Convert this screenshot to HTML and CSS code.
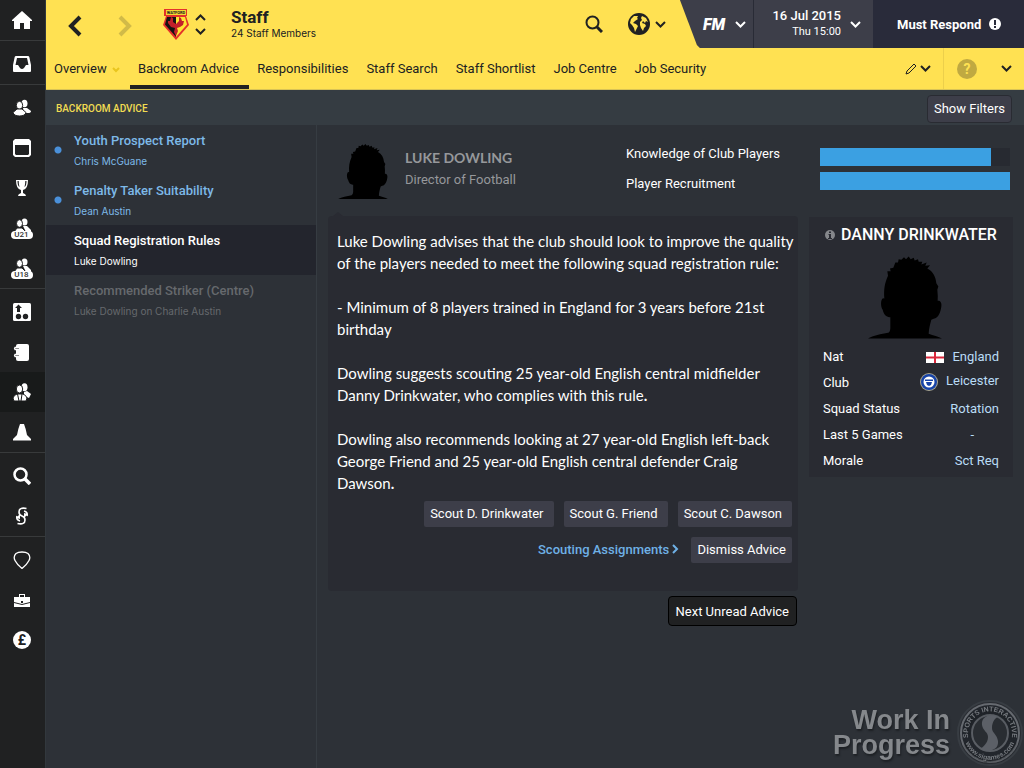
FILE: index.html
```html
<!DOCTYPE html>
<html lang="en">
<head>
    <meta charset="UTF-8">
    <meta name="viewport" content="width=device-width, initial-scale=1.0">
    <title>Staff - Backroom Advice</title>
    <link rel="stylesheet" href="styles.css">
</head>
<body>
    <nav class="sidebar" aria-label="Main">
        <div class="side-group">
            <a href="#" aria-label="Home"><svg width="20" height="20" viewBox="0 0 20 20"><path d="M10 1 20 10v1h-2v8h-6v-6H8v6H2v-8H0v-1z"/></svg></a>
        </div>
        <div class="side-group">
            <a href="#" aria-label="Inbox"><svg width="18" height="18" viewBox="0 0 18 18"><path fill-rule="evenodd" d="M3 1h12q1 0 1.300 1L18 10v6q0 1-1 1H1q-1 0-1-1v-6l1.700-8Q2 1 3 1zm1 2L2.500 10H5l2 3q2 2 4 0l2-3h2.500L14 3z"/></svg></a>
        </div>
        <div class="side-group">
            <a href="#" aria-label="Squad"><svg width="18" height="18" viewBox="0 0 18 18"><ellipse cx="11.500" cy="4.500" rx="3" ry="3.800"/><path d="M10 9h4l4 3q0 2-3 2h-4z"/><g class="cut"><ellipse cx="6.500" cy="6.300" rx="3.200" ry="4"/><path d="M4 10h5l4 3.500Q12 17 6.500 17T0 13.500z"/></g></svg></a>
            <a href="#" aria-label="Calendar"><svg width="18" height="18" viewBox="0 0 18 18"><path fill-rule="evenodd" d="M2 0h14l2 2v14l-2 2H2l-2-2V2zm0 6v9l1 1h12l1-1V6z"/></svg></a>
            <a href="#" aria-label="Competitions"><svg width="18" height="18" viewBox="0 0 18 18"><path fill-rule="evenodd" d="M3 1h12q0 9-5 10v3q3 1 3 3H5q0-2 3-3v-3Q3 10 3 1zm1.500 1q0 5 2 6Q5.700 5 5.700 2zm7.800 0q0 3-.8 6 2-1 2-6z"/></svg></a>
            <a href="#" aria-label="Under 21s" class="team"><svg width="18" height="15" viewBox="0 0 18 15"><ellipse cx="11.500" cy="4" rx="3" ry="3.500"/><path d="M10 8h4l4 4v2h-5z"/><g class="cut"><ellipse cx="6.500" cy="5.500" rx="3" ry="3.800"/><path d="M4 10h5l4 4H1z"/></g></svg><span>U21</span></a>
            <a href="#" aria-label="Under 18s" class="team"><svg width="18" height="15" viewBox="0 0 18 15"><ellipse cx="11.500" cy="4" rx="3" ry="3.500"/><path d="M10 8h4l4 4v2h-5z"/><g class="cut"><ellipse cx="6.500" cy="5.500" rx="3" ry="3.800"/><path d="M4 10h5l4 4H1z"/></g></svg><span>U18</span></a>
        </div>
        <div class="side-group">
            <a href="#" aria-label="Tactics"><svg width="18" height="18" viewBox="0 0 18 18"><rect width="18" height="18" rx="1.500"/><g fill="#202122"><path d="M5.500 1.500 9 5H7v4H4V5H2z"/><circle cx="5.500" cy="13.500" r="2.700"/><circle cx="12.500" cy="13.500" r="2.700"/></g></svg></a>
            <a href="#" aria-label="Team report"><svg width="18" height="18" viewBox="0 0 18 18"><rect x="3" y="1" width="13" height="17" rx="2"/><g fill="none" stroke="#202122" stroke-width="3"><path d="M1 5.500h5M1 12.500h5"/></g><path fill="none" stroke="#fff" stroke-width="1.300" d="M6 4.500H2q-1 1 0 2h4M6 11.500H2q-1 1 0 2h4"/></svg></a>
            <a href="#" aria-label="Staff" class="active"><svg width="18" height="18" viewBox="0 0 18 18"><ellipse cx="11.500" cy="4.200" rx="3" ry="4"/><path d="m11 9 3-1 4 3-2 4-5-2z"/><g class="cut"><ellipse cx="6.500" cy="6" rx="3.200" ry="4"/><path d="M4 11h6q3 1 4 4l-1 3H1l-1-3q1-3 4-4z"/></g><path stroke="#181a1a" d="M4.500 11 6 18M9 11l-1 7"/></svg></a>
            <a href="#" aria-label="Training"><svg width="18" height="18" viewBox="0 0 18 18"><path d="M7 1h4q2 5 3 11l4 4v1.500H0V16l4-4Q5 6 7 1z"/></svg></a>
        </div>
        <div class="side-group">
            <a href="#" aria-label="Scouting"><svg width="18" height="18" viewBox="0 0 18 18" fill="none" stroke="#fff" stroke-width="2.500"><circle cx="7.500" cy="7.500" r="6"/><path stroke-width="3.500" d="m12 12 5 5"/></svg></a>
            <a href="#" aria-label="Transfers"><svg width="18" height="18" viewBox="0 0 18 18"><path fill="none" stroke="#fff" stroke-width="1.600" d="M13.500 1.500Q6 0 6 5q0 3 3 4t3 4q0 5-7.500 3.500M4 9q-1 4 3 5M14 9q1-4-3-5"/><path d="m3 11 4-4v5zM15 7l-4 4V6z"/></svg></a>
        </div>
        <div class="side-group">
            <a href="#" aria-label="Club"><svg width="18" height="18" viewBox="0 0 18 18" fill="none" stroke="#fff" stroke-width="1.300"><path d="M9 1q4 0 6 1.500 3 3 1 7-2 4-7 8-5-4-7-8-2-4 1-7Q5 1 9 1z"/></svg></a>
            <a href="#" aria-label="Board"><svg width="18" height="18" viewBox="0 0 18 18"><path fill-rule="evenodd" d="M6 3h6v3h5v5l-8 2-8-2V6h5zm1 1v2h4V4z"/><path d="m1 12 8 2 8-2v4H1z"/><path fill="#202122" d="M8 10h2v2H8z"/></svg></a>
            <a href="#" aria-label="Finances"><svg width="18" height="18" viewBox="0 0 18 18"><circle cx="9" cy="9" r="9"/><text class="pound" x="9" y="14" text-anchor="middle">£</text></svg></a>
        </div>
    </nav>

    <div class="page">
        <header>
            <div class="top-bar">
                <button class="icon-btn back" aria-label="Back"><svg width="14" height="22" viewBox="0 0 14 22"><path d="M12 2 3 11l9 9"/></svg></button>
                <button class="icon-btn forward" aria-label="Forward"><svg width="14" height="22" viewBox="0 0 14 22"><path d="m2 2 9 9-9 9"/></svg></button>
                <svg class="crest" width="26" height="31" viewBox="0 0 26 31">
                    <path fill="#e4312b" d="M1 0h23v7h-1l3 9-13 15L0 16l3-9H1z"/>
                    <path fill="#161412" d="M4 8h9v20L2 15.500z"/>
                    <path fill="#ffe533" d="M13 8h9l2 7.500L13 28z"/>
                    <path fill="#f4d731" d="M3 1h20v5H3z"/>
                    <path fill="#c3202a" d="m5 12 2 0 1-4 2 1 0 4 3 2 3-3 0-4 2 1 1 3 2 0-1 4-3 2-3 1 1 3-2 5-2-4 1-4-4-1-3-4z"/>
                    <text class="crest-name" x="13" y="5" text-anchor="middle">WATFORD</text>
                </svg>
                <div class="stepper">
                    <button class="icon-btn" aria-label="Previous section"><svg width="11" height="7" viewBox="0 0 11 7"><path d="m1 6 4.500-4.500L10 6"/></svg></button>
                    <button class="icon-btn" aria-label="Next section"><svg width="11" height="7" viewBox="0 0 11 7"><path d="m1 1 4.500 4.500L10 1"/></svg></button>
                </div>
                <div class="title">
                    <h1>Staff</h1>
                    <p>24 Staff Members</p>
                </div>
                <button class="icon-btn search" aria-label="Search"><svg width="18" height="18" viewBox="0 0 18 18"><circle cx="7.500" cy="7.500" r="6"/><path stroke-width="3" d="m12 12 5 5"/></svg></button>
                <button class="icon-btn world" aria-label="World">
                    <svg width="22" height="22" viewBox="0 0 22 22"><circle cx="11" cy="11" r="11" fill="#202122" stroke="none"/><path stroke="none" fill="#ffe152" d="m3 6 3-3 4 0-1 2 1 1-3 2-2 2 3 1 2 2-1 2-2 4-1-4-2-3-2-2zM14 3l4 2 2 4-2-1-1 2-2-2-1 2 3 1 1 2-2 2-1 3-2-3-1-3 0-3 2-2-1-2z"/></svg>
                    <svg width="11" height="7" viewBox="0 0 11 7"><path d="m1 1 4.500 4.500L10 1"/></svg>
                </button>
                <div class="game-bar">
                    <button class="fm"><strong>FM</strong><svg width="11" height="7" viewBox="0 0 11 7"><path d="m1 1 4.500 4.500L10 1"/></svg></button>
                    <button class="date"><span><strong>16 Jul 2015</strong><small>Thu 15:00</small></span><svg width="11" height="7" viewBox="0 0 11 7"><path d="m1 1 4.500 4.500L10 1"/></svg></button>
                    <button class="respond">Must Respond <svg width="12" height="12" viewBox="0 0 12 12"><circle cx="6" cy="6" r="6" fill="#fff" stroke="none"/><path stroke="#292b3a" d="M6 2v5M6 8v2"/></svg></button>
                </div>
            </div>
            <div class="tab-bar">
                <nav class="tabs" aria-label="Staff">
                    <a href="#">Overview <svg width="8" height="6" viewBox="0 0 8 6"><path d="m1 1 3 3 3-3"/></svg></a>
                    <a href="#" class="active">Backroom Advice</a>
                    <a href="#">Responsibilities</a>
                    <a href="#">Staff Search</a>
                    <a href="#">Staff Shortlist</a>
                    <a href="#">Job Centre</a>
                    <a href="#">Job Security</a>
                </nav>
                <button class="icon-btn edit" aria-label="Edit">
                    <svg width="12" height="12" viewBox="0 0 12 12"><path stroke-width="1" d="m1 11 1-3 7-7 2 2-7 7z"/></svg>
                    <svg width="11" height="7" viewBox="0 0 11 7"><path d="m1 1 4.500 4.500L10 1"/></svg>
                </button>
                <div class="help">
                    <button class="help-btn" aria-label="Help">?</button>
                    <button class="icon-btn" aria-label="More"><svg width="11" height="7" viewBox="0 0 11 7"><path d="m1 1 4.500 4.500L10 1"/></svg></button>
                </div>
            </div>
        </header>

        <div class="sub-header">
            <h2>Backroom Advice</h2>
            <button class="btn filters">Show Filters</button>
        </div>

        <div class="content">
            <ul class="advice-list">
                <li><a href="#" class="unread"><b>Youth Prospect Report</b><span>Chris McGuane</span></a></li>
                <li><a href="#" class="unread"><b>Penalty Taker Suitability</b><span>Dean Austin</span></a></li>
                <li><a href="#" class="selected"><b>Squad Registration Rules</b><span>Luke Dowling</span></a></li>
                <li><a href="#" class="done"><b>Recommended Striker (Centre)</b><span>Luke Dowling on Charlie Austin</span></a></li>
            </ul>

            <main>
                <section class="advisor">
                    <svg class="face" width="50" height="55" viewBox="0 0 222 246"><path d="M0 246C15 238 40 232 60 229q6-1 7-14v-33c-12 1-19-7-23-22-6-10-7-30 1-35l4 1c-2-26 1-46 11-68l-2-14h10l-2-8 10-2 6-16h8l2-10 8 2 8-8 6 6 8-8 6 8 9-4 3 8 10-4 2 8h11l-3 8 16-6-4 10 14-2-8 10c17 9 25 24 27 44l6 10-3 10q2 18 1 33c7-1 13 5 11 17-2 15-8 35-23 37l-7 3c-4 15-7 25-8 42 13 6 30 8 40 14z"/></svg>
                    <div class="advisor-name">
                        <h3>Luke Dowling</h3>
                        <p>Director of Football</p>
                    </div>
                    <div class="skills">
                        <span id="knowledge">Knowledge of Club Players</span>
                        <span id="recruitment">Player Recruitment</span>
                    </div>
                </section>

                <div class="bars">
                    <div class="bar" role="meter" aria-labelledby="knowledge" aria-valuenow="90"><div style="width: 90%"></div></div>
                    <div class="bar" role="meter" aria-labelledby="recruitment" aria-valuenow="100"><div style="width: 100%"></div></div>
                </div>

                <section class="advice">
                    <div class="message">
                        <p>Luke Dowling advises that the club should look to improve the quality<br>of the players needed to meet the following squad registration rule:</p>
                        <p>- Minimum of 8 players trained in England for 3 years before 21st<br>birthday</p>
                        <p>Dowling suggests scouting 25 year-old English central midfielder<br>Danny Drinkwater, who complies with this rule<b>.</b></p>
                        <p>Dowling also recommends looking at 27 year-old English left-back<br>George Friend and 25 year-old English central defender Craig<br>Dawson<b>.</b></p>
                        <div class="actions">
                            <button class="btn scout">Scout D. Drinkwater</button>
                            <button class="btn scout">Scout G. Friend</button>
                            <button class="btn scout">Scout C. Dawson</button>
                        </div>
                        <div class="actions">
                            <a href="#">Scouting Assignments <svg width="7" height="10" viewBox="0 0 7 10"><path d="m1 1 4 4-4 4"/></svg></a>
                            <button class="btn">Dismiss Advice</button>
                        </div>
                    </div>
                    <button class="btn next">Next Unread Advice</button>
                </section>

                <aside class="player">
                    <h3><svg width="10" height="10" viewBox="0 0 10 10"><circle cx="5" cy="5" r="5" fill="#85878b"/><path fill="#292b32" d="M4 1.500h2V3H4zM3.500 4H6v4h1v1H3V8h1V5h-.5z"/></svg>Danny Drinkwater</h3>
                    <svg class="face" width="74" height="83" viewBox="0 0 222 246"><path d="M0 246C15 238 40 232 60 229q6-1 7-14v-33c-12 1-19-7-23-22-6-10-7-30 1-35l4 1c-2-26 1-46 11-68l-2-14h10l-2-8 10-2 6-16h8l2-10 8 2 8-8 6 6 8-8 6 8 9-4 3 8 10-4 2 8h11l-3 8 16-6-4 10 14-2-8 10c17 9 25 24 27 44l6 10-3 10q2 18 1 33c7-1 13 5 11 17-2 15-8 35-23 37l-7 3c-4 15-7 25-8 42 13 6 30 8 40 14z"/></svg>
                    <table>
                        <tr><th scope="row">Nat</th><td><svg width="18" height="11" viewBox="0 0 18 11"><path fill="#fff" d="M0 0h18v11H0z"/><path fill="#d9283c" d="M8 0h2v11H8zM0 4.500h18v2H0z"/></svg><a href="#">England</a></td></tr>
                        <tr><th scope="row">Club</th><td><svg width="18" height="18" viewBox="0 0 18 18"><circle cx="9" cy="9" r="9" fill="#a9a693"/><circle cx="9" cy="9" r="8" fill="#1743a8"/><circle cx="9" cy="9" r="5.500" fill="#fff"/><path fill="#1743a8" d="M5 6.500h8V8H5zM6 9h6l-1 3-2 1-2-1z"/></svg><a href="#">Leicester</a></td></tr>
                        <tr><th scope="row">Squad Status</th><td>Rotation</td></tr>
                        <tr><th scope="row">Last 5 Games</th><td class="none">-</td></tr>
                        <tr><th scope="row">Morale</th><td>Sct Req</td></tr>
                    </table>
                </aside>
            </main>
        </div>
    </div>

    <footer class="watermark">
        <p>Work In<br>Progress</p>
        <svg width="66" height="66" viewBox="0 0 66 66">
            <circle cx="33" cy="33" r="32" fill="#292c32" stroke="#383d43" stroke-width="2"/>
            <circle cx="33" cy="33" r="29" fill="#22262c" stroke="#666a70" stroke-width="2"/>
            <circle cx="33" cy="33" r="18" fill="#292d32" stroke="#5a5e64" stroke-width="2"/>
            <path fill="#5c6067" d="M42 16c-10-3-18 1-17 9 1 6 6 7 6 12 0 6-5 10-8 12 9 4 19 1 18-8-1-7-6-8-6-13 0-6 3-10 7-12z"/>
            <path id="arc-top" fill="none" d="M12 40a22 22 0 1 1 42 0"/>
            <path id="arc-bottom" fill="none" d="M8 41a26 26 0 0 0 50 0"/>
            <text class="ring"><textPath href="#arc-top" startOffset="50%" text-anchor="middle">SPORTS INTERACTIVE</textPath></text>
            <text class="ring"><textPath href="#arc-bottom" startOffset="50%" text-anchor="middle">www.sigames.com</textPath></text>
        </svg>
    </footer>
</body>
</html>
```
FILE: styles.css
```css
* {
    box-sizing: border-box;
}

body {
    display: flex;
    min-height: 100vh;
    margin: 0;
    background-color: #2d3137;
    color: #fff;
    font-family: Roboto, Arial, sans-serif;
    font-size: 13px;
}

h1, h2, h3, p {
    margin: 0;
}

a {
    color: inherit;
    text-decoration: none;
}

button {
    border: none;
    padding: 0;
    background: none;
    color: inherit;
    font: inherit;
    cursor: pointer;
}

/* sidebar */

.sidebar {
    flex: none;
    width: 46px;
    background-color: #202122;
    border-right: 1px solid #32383d;
}

.side-group {
    padding-top: 3px;
    border-bottom: 1px solid #383a3b;
}

.side-group:first-child {
    padding-top: 0;
}

.side-group:last-child {
    border-bottom: none;
}

.side-group a {
    display: flex;
    align-items: center;
    justify-content: center;
    height: 40px;
    padding-right: 2px;
}

.side-group a.active {
    background-color: #181a1a;
}

.sidebar svg {
    fill: #fff;
}

.sidebar svg[fill="none"] {
    fill: none;
}

.sidebar .cut {
    stroke: #202122;
    stroke-width: 1px;
}

.side-group a.team {
    flex-direction: column;
}

.team span {
    width: 22px;
    margin-top: -2px;
    border-radius: 4px;
    background-color: #fff;
    color: #333;
    font-size: 8px;
    font-weight: 500;
    line-height: 8px;
    text-align: center;
}

.pound {
    fill: #202122;
    font-size: 14px;
    font-weight: bold;
}

/* header */

.page {
    display: flex;
    flex: 1;
    flex-direction: column;
    min-width: 0;
}

header {
    background-color: #ffe152;
    color: #202122;
    border-bottom: 1px solid #d9c356;
}

header svg {
    fill: none;
    stroke: #202122;
    stroke-width: 2px;
}

.top-bar {
    display: flex;
    align-items: center;
    height: 48px;
    padding-left: 22px;
}

.icon-btn {
    display: flex;
    align-items: center;
}

.back svg, .forward svg {
    stroke-width: 4px;
}

.back, .forward {
    padding-top: 3px;
}

.forward {
    margin-left: 36px;
    opacity: 0.2;
}

.crest {
    margin-left: 31px;
    stroke: none;
}

.crest-name {
    fill: #202122;
    font-size: 4px;
    font-weight: bold;
}

.stepper {
    display: flex;
    flex-direction: column;
    gap: 7px;
    margin-left: 6px;
}

.title {
    flex: 1;
    margin-left: 25px;
}

h1 {
    font-size: 17px;
    line-height: 18px;
}

.title p {
    font-family: Inter, sans-serif;
    font-size: 10px;
    line-height: 14px;
}

.world {
    gap: 5px;
    margin: 0 14px 0 25px;
}

.game-bar {
    display: flex;
    align-self: stretch;
    background-color: #3d3e49;
    color: #fff;
    clip-path: polygon(0 0, 100% 0, 100% 100%, 20px 100%, 17px 45px);
}

.game-bar svg {
    stroke: #fff;
}

.game-bar button {
    display: flex;
    align-items: center;
}

.fm {
    gap: 10px;
    padding: 0 7px 0 23px;
    border-right: 1px solid #292b36;
}

.fm strong {
    font-size: 16px;
    font-style: italic;
    font-weight: 900;
}

.game-bar .date {
    justify-content: flex-end;
    width: 119px;
    gap: 9px;
    padding-right: 12px;
    text-align: right;
}

.date strong, .date small {
    display: block;
    line-height: 16px;
}

.date strong {
    font-weight: 500;
}

.date small {
    font-size: 11px;
}

.game-bar .respond {
    gap: 8px;
    width: 151px;
    padding-left: 24px;
    background-color: #292b3a;
    font-weight: bold;
}

.tab-bar {
    display: flex;
    height: 41px;
}

.tabs {
    display: flex;
    flex: 1;
}

.tabs a {
    padding: 0 10px 0 8px;
    border-bottom: 4px solid transparent;
    line-height: 41px;
    white-space: nowrap;
}

.tabs a.active {
    border-color: #202122;
}

.tabs svg {
    margin-left: 2px;
    stroke: #e9c51e;
}

.edit {
    gap: 3px;
    padding-right: 12px;
}

.help {
    display: flex;
    align-items: center;
    gap: 24px;
    padding: 0 12px 0 13px;
    border-left: 1px solid #eccf4b;
}

.help-btn {
    width: 20px;
    height: 20px;
    border-radius: 50%;
    background-color: #c0a941;
    color: #ffe152;
    font-size: 14px;
    font-weight: bold;
}

.sub-header {
    display: flex;
    align-items: center;
    justify-content: space-between;
    height: 35px;
    padding: 2px 12px 0 10px;
    background-color: #353c42;
}

h2 {
    color: #f2dc52;
    font-size: 10px;
    font-weight: 500;
    text-transform: uppercase;
}

.btn {
    height: 26px;
    padding: 0 6px;
    border-radius: 2px;
    background-color: #3d3e49;
    font-size: 13px;
}

.btn.filters {
    height: 28px;
    border: 1px solid #292b32;
    border-radius: 4px;
}

/* advice list */

.content {
    display: flex;
    flex: 1;
}

.advice-list {
    flex: none;
    width: 271px;
    margin: 0;
    padding: 0;
    border-right: 1px solid #363c42;
    list-style: none;
}

.advice-list a {
    display: block;
    height: 50px;
    padding: 6px 8px 0 28px;
    color: #7db9e8;
}

.advice-list b, .advice-list span {
    display: block;
    line-height: 20px;
}

.advice-list b {
    font-weight: 500;
}

.advice-list span {
    font-family: Inter, sans-serif;
    font-size: 10px;
}

.advice-list .unread {
    background: radial-gradient(circle at 12px 25px, #4a90d9 3px, transparent 4px);
}

.advice-list .selected {
    background-color: #23252d;
    color: #fff;
}

.advice-list .done {
    color: #66696d;
}

/* advisor and advice */

main {
    display: grid;
    flex: 1;
    grid-template-columns: 1fr 204px;
    grid-template-rows: 91px auto;
    column-gap: 11px;
    align-items: start;
    padding: 0 11px;
}

.advisor {
    display: flex;
    padding: 19px 0 0 10px;
}

.advisor-name {
    flex: 1;
    padding: 3px 0 0 17px;
    color: #96989b;
}

.advisor-name h3 {
    font-family: Lato, sans-serif;
    font-size: 14px;
    line-height: 22px;
    text-transform: uppercase;
}

.advisor-name p {
    line-height: 22px;
}

.skills {
    width: 172px;
}

.skills span {
    display: block;
    height: 30px;
    line-height: 20px;
}

.bars {
    display: grid;
    gap: 6px;
    padding: 23px 3px 0 11px;
}

.bar {
    height: 18px;
    background-color: #272a31;
}

.bar div {
    height: 100%;
    background-color: #3ba0e2;
}

.message {
    position: relative;
    padding: 14px 0 28px 9px;
    border-radius: 4px;
    background-color: #292b32;
    font-family: Lato, sans-serif;
    font-size: 15px;
    line-height: 22px;
}

.message::before {
    content: "";
    position: absolute;
    top: -4px;
    left: 5px;
    border: 5px solid transparent;
    border-top: none;
    border-bottom: 4px solid #292b32;
}

.message p + p {
    margin-top: 22px;
}

.actions {
    display: flex;
    align-items: center;
    justify-content: flex-end;
    gap: 10px;
    margin-top: 10px;
    padding-right: 6px;
    font-family: Roboto, Arial, sans-serif;
    font-size: 13px;
}

.message p + .actions {
    margin-top: 7px;
}

.actions a {
    padding-right: 2px;
    color: #6fb1e6;
    font-weight: 500;
}

.actions a svg {
    fill: none;
    stroke: #6fb1e6;
    stroke-width: 2px;
}

.btn.scout {
    padding-right: 10px;
}

.btn.next {
    display: block;
    height: 30px;
    margin: 5px 1px 0 auto;
    padding: 0 7px;
    border: 1px solid #000;
    border-radius: 4px;
    background-color: #202122;
}

/* player card */

.player {
    margin-top: 1px;
    padding: 6px 14px 4px;
    background-color: #292b32;
}

.player h3 {
    display: flex;
    align-items: center;
    justify-content: center;
    gap: 6px;
    font-size: 16px;
    font-weight: 500;
    line-height: 24px;
    text-transform: uppercase;
    white-space: nowrap;
}

.player .face {
    display: block;
    margin: 9px auto 4px 45px;
}

.player table {
    width: 100%;
    border-collapse: collapse;
}

.player th, .player td {
    height: 26px;
    padding: 0;
    font-weight: normal;
    text-align: left;
}

.player td {
    color: #b9dcf6;
    text-align: right;
}

.player td svg {
    margin-right: 8px;
    vertical-align: middle;
}

.player td.none {
    padding-right: 25px;
}

/* watermark */

.watermark {
    position: fixed;
    right: 1px;
    bottom: 2px;
    display: flex;
    align-items: center;
    gap: 7px;
    color: #85888c;
    font-family: "Liberation Sans", Arial, sans-serif;
    font-size: 27px;
    font-weight: bold;
    line-height: 25px;
    text-align: right;
    text-shadow: 1px 2px 2px #1d2024;
}

.ring {
    fill: #777b80;
    font-size: 7px;
}
```
